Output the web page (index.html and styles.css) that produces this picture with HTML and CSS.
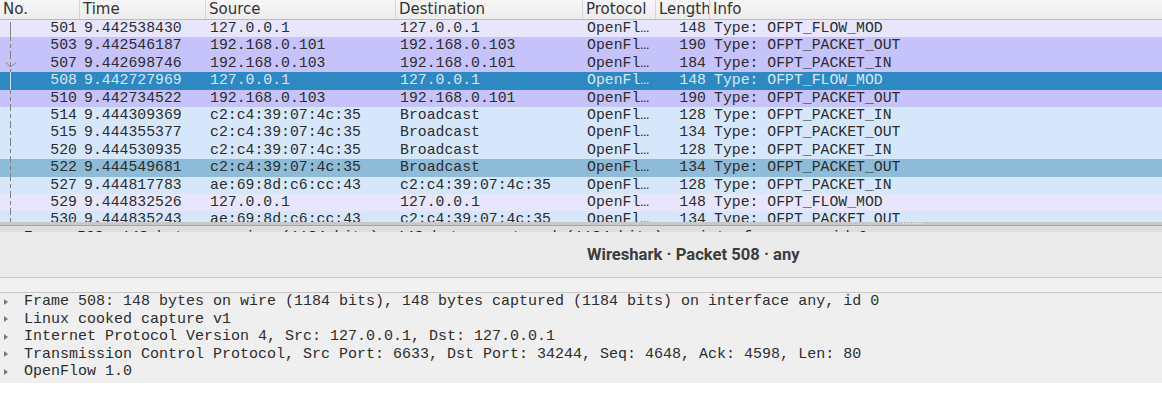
FILE: index.html
```html
<!DOCTYPE html>
<html lang="en">
<head>
  <meta charset="UTF-8">
  <title>Wireshark · Packet 508 · any</title>
  <link rel="stylesheet" href="styles.css">
</head>
<body>
  <div class="packet-list">
    <div class="list-header">
      <div class="hcell">No.</div>
      <div class="hcell">Time</div>
      <div class="hcell">Source</div>
      <div class="hcell">Destination</div>
      <div class="hcell">Protocol</div>
      <div class="hcell">Length</div>
      <div class="hcell">Info</div>
    </div>
    <div class="list-body">
      <div class="row flow">
        <div class="cell num rel rel-first">501</div><div class="cell">9.442538430</div><div class="cell">127.0.0.1</div><div class="cell">127.0.0.1</div><div class="cell">OpenFl…</div><div class="cell len">148</div><div class="cell">Type: OFPT_FLOW_MOD</div>
      </div>
      <div class="row pkt">
        <div class="cell num rel rel-dash">503</div><div class="cell">9.442546187</div><div class="cell">192.168.0.101</div><div class="cell">192.168.0.103</div><div class="cell">OpenFl…</div><div class="cell len">190</div><div class="cell">Type: OFPT_PACKET_OUT</div>
      </div>
      <div class="row pkt">
        <div class="cell num rel rel-dash">
          <svg class="ack" width="12" height="8" viewBox="0 0 12 8"><polyline points="1,1 5,6 11,2" fill="none" stroke="#8a8a8a" stroke-width="1"/></svg>507</div><div class="cell">9.442698746</div><div class="cell">192.168.0.103</div><div class="cell">192.168.0.101</div><div class="cell">OpenFl…</div><div class="cell len">184</div><div class="cell">Type: OFPT_PACKET_IN</div>
      </div>
      <div class="row selected">
        <div class="cell num rel rel-sel">508</div><div class="cell">9.442727969</div><div class="cell">127.0.0.1</div><div class="cell">127.0.0.1</div><div class="cell">OpenFl…</div><div class="cell len">148</div><div class="cell">Type: OFPT_FLOW_MOD</div>
      </div>
      <div class="row pkt">
        <div class="cell num rel rel-dash">510</div><div class="cell">9.442734522</div><div class="cell">192.168.0.103</div><div class="cell">192.168.0.101</div><div class="cell">OpenFl…</div><div class="cell len">190</div><div class="cell">Type: OFPT_PACKET_OUT</div>
      </div>
      <div class="row arp">
        <div class="cell num rel rel-dash">514</div><div class="cell">9.444309369</div><div class="cell">c2:c4:39:07:4c:35</div><div class="cell">Broadcast</div><div class="cell">OpenFl…</div><div class="cell len">128</div><div class="cell">Type: OFPT_PACKET_IN</div>
      </div>
      <div class="row arp">
        <div class="cell num rel rel-dash">515</div><div class="cell">9.444355377</div><div class="cell">c2:c4:39:07:4c:35</div><div class="cell">Broadcast</div><div class="cell">OpenFl…</div><div class="cell len">134</div><div class="cell">Type: OFPT_PACKET_OUT</div>
      </div>
      <div class="row arp">
        <div class="cell num rel rel-dash">520</div><div class="cell">9.444530935</div><div class="cell">c2:c4:39:07:4c:35</div><div class="cell">Broadcast</div><div class="cell">OpenFl…</div><div class="cell len">128</div><div class="cell">Type: OFPT_PACKET_IN</div>
      </div>
      <div class="row related">
        <div class="cell num rel rel-dash">522</div><div class="cell">9.444549681</div><div class="cell">c2:c4:39:07:4c:35</div><div class="cell">Broadcast</div><div class="cell">OpenFl…</div><div class="cell len">134</div><div class="cell">Type: OFPT_PACKET_OUT</div>
      </div>
      <div class="row arp">
        <div class="cell num rel rel-dash">527</div><div class="cell">9.444817783</div><div class="cell">ae:69:8d:c6:cc:43</div><div class="cell">c2:c4:39:07:4c:35</div><div class="cell">OpenFl…</div><div class="cell len">128</div><div class="cell">Type: OFPT_PACKET_IN</div>
      </div>
      <div class="row flow">
        <div class="cell num rel rel-dash">529</div><div class="cell">9.444832526</div><div class="cell">127.0.0.1</div><div class="cell">127.0.0.1</div><div class="cell">OpenFl…</div><div class="cell len">148</div><div class="cell">Type: OFPT_FLOW_MOD</div>
      </div>
      <div class="row arp">
        <div class="cell num rel rel-dash">530</div><div class="cell">9.444835243</div><div class="cell">ae:69:8d:c6:cc:43</div><div class="cell">c2:c4:39:07:4c:35</div><div class="cell">OpenFl…</div><div class="cell len">134</div><div class="cell">Type: OFPT_PACKET_OUT</div>
      </div>
    </div>
  </div>

  <div class="splitter">
    <div class="splitter-bar"><span class="grip"></span></div>
    <div class="hidden-line">
      <div class="hidden-text">▸ Frame 508: 148 bytes on wire (1184 bits), 148 bytes captured (1184 bits) on interface any, id 0</div>
    </div>
  </div>

  <div class="dialog">
    <div class="dialog-title">Wireshark · Packet 508 · any</div>
    <div class="dialog-strip"></div>
    <div class="tree">
      <div class="tree-row"><span class="arrow"></span>Frame 508: 148 bytes on wire (1184 bits), 148 bytes captured (1184 bits) on interface any, id 0</div>
      <div class="tree-row"><span class="arrow"></span>Linux cooked capture v1</div>
      <div class="tree-row"><span class="arrow"></span>Internet Protocol Version 4, Src: 127.0.0.1, Dst: 127.0.0.1</div>
      <div class="tree-row"><span class="arrow"></span>Transmission Control Protocol, Src Port: 6633, Dst Port: 34244, Seq: 4648, Ack: 4598, Len: 80</div>
      <div class="tree-row"><span class="arrow"></span>OpenFlow 1.0</div>
    </div>
  </div>
</body>
</html>
```

FILE: styles.css
```css
body {
  margin: 0;
  background: #fff;
  color: #2d2d2d;
  font-family: "Liberation Mono", monospace;
  font-size: 14.8px;
}
.packet-list {
  height: 222px;
  overflow: hidden;
  background: #fff;
}
.list-header,
.row {
  display: grid;
  grid-template-columns: 80px 126px 190px 187px 73px 54px 1fr;
}
.list-header {
  height: 19px;
  border-bottom: 1px solid #bcbcbc;
  background: linear-gradient(#f7f7f7, #ececec);
  font-family: "DejaVu Sans", sans-serif;
  font-size: 15px;
  color: #333;
}
.hcell {
  padding: 0 3px;
  line-height: 18px;
  border-right: 1px solid #d6d6d6;
  white-space: nowrap;
  overflow: hidden;
}
.hcell:last-child {
  border-right: none;
}
.row {
  height: 17.4px;
  line-height: 17.4px;
}
.cell {
  padding: 0 4px;
  white-space: nowrap;
  overflow: hidden;
}
.num,
.len {
  text-align: right;
}
.num {
  padding-right: 3px;
}
.flow {
  background: #e7e6fd;
}
.pkt {
  background: #c6c2fa;
}
.arp {
  background: #d6e7fc;
}
.related {
  background: #8dbbd8;
}
.selected {
  background: #2e89c3;
  color: #d6e6f4;
}
.rel {
  position: relative;
}
.rel::before {
  content: "";
  position: absolute;
  left: 10px;
  top: 0;
  bottom: 0;
  width: 1px;
}
.rel-first::before {
  top: 2px;
  background: #858585;
}
.rel-dash::before {
  background: repeating-linear-gradient(to bottom, #7f7f7f 0 4px, transparent 4px 7px);
}
.rel-sel::before {
  background: #d0e2f1;
}
.ack {
  position: absolute;
  left: 5px;
  top: 6px;
}
.splitter {
  height: 10px;
  position: relative;
  overflow: hidden;
}
.splitter-bar {
  height: 3px;
  background: #c9c9c9;
  border-bottom: 1px solid #a6a6a6;
}
.grip {
  position: absolute;
  left: 903px;
  top: 1px;
  width: 20px;
  height: 1px;
  background: repeating-linear-gradient(to right, #efefef 0 1px, transparent 1px 3px);
}
.hidden-line {
  height: 6px;
  background: #dedede;
  overflow: hidden;
}
.hidden-text {
  margin-top: 4px;
  padding-left: 6px;
  line-height: 15px;
  white-space: nowrap;
  color: #222;
}
.dialog {
  background: #fff;
}
.dialog-title {
  height: 45px;
  line-height: 46px;
  padding-left: 587px;
  background: #ebebeb;
  border-bottom: 1px solid #c6c6c6;
  font-family: Roboto, sans-serif;
  font-weight: bold;
  font-size: 16.6px;
  color: #3c3c3c;
}
.dialog-strip {
  height: 14px;
  background: #f1f1f1;
  border-bottom: 1px solid #c6c6c6;
}
.tree {
  background: #efefef;
  padding-bottom: 2px;
  font-size: 15px;
}
.tree-row {
  display: flex;
  align-items: center;
  height: 17.5px;
  white-space: nowrap;
  color: #2d2d2d;
}
.arrow {
  width: 0;
  height: 0;
  margin: 0 16px 0 4px;
  border-left: 4px solid #7a7a7a;
  border-top: 3.5px solid transparent;
  border-bottom: 3.5px solid transparent;
}
```
